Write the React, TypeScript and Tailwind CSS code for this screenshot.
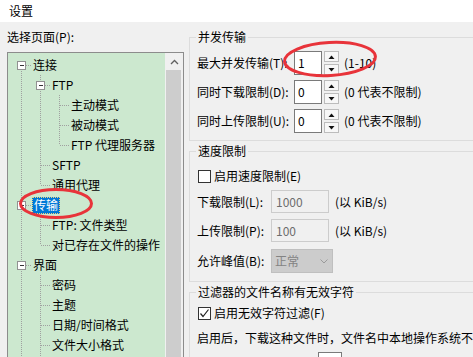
type Kind = "full" | "top" | "bottom" | "none";

type TreeRow = {
  label: string;
  cells: Kind[];
  expander?: boolean;
  selected?: boolean;
};

const rows: TreeRow[] = [
  { label: "连接", cells: ["bottom"], expander: true },
  { label: "FTP", cells: ["full", "full"], expander: true },
  { label: "主动模式", cells: ["full", "full", "full"] },
  { label: "被动模式", cells: ["full", "full", "full"] },
  { label: "FTP 代理服务器", cells: ["full", "full", "top"] },
  { label: "SFTP", cells: ["full", "full"] },
  { label: "通用代理", cells: ["full", "top"] },
  { label: "传输", cells: ["full"], expander: true, selected: true },
  { label: "FTP: 文件类型", cells: ["full", "full"] },
  { label: "对已存在文件的操作", cells: ["full", "top"] },
  { label: "界面", cells: ["full"], expander: true },
  { label: "密码", cells: ["full", "full"] },
  { label: "主题", cells: ["full", "full"] },
  { label: "日期/时间格式", cells: ["full", "full"] },
  { label: "文件大小格式", cells: ["full", "full"] },
  // last row is below the fold, only its tree lines peek in
  { label: "", cells: ["full", "full"] },
];

function TreeCell({ kind, connector, expander }: { kind: Kind; connector: boolean; expander?: boolean }) {
  const y1 = kind === "bottom" ? 10 : 0;
  const y2 = kind === "top" ? 10 : 20;
  return (
    <svg width="19" height="20" className="shrink-0" shapeRendering="crispEdges">
      {kind !== "none" && (
        <line x1="9.5" y1={y1} x2="9.5" y2={y2} stroke="#a0a0a0" strokeDasharray="1 1" />
      )}
      {connector && <line x1="10" y1="10.5" x2="19" y2="10.5" stroke="#a0a0a0" strokeDasharray="1 1" />}
      {expander && (
        <g>
          <rect x="5.5" y="6.5" width="8" height="8" fill="#ffffff" stroke="#919191" />
          <line x1="7.5" y1="10.5" x2="12" y2="10.5" stroke="#333333" />
        </g>
      )}
    </svg>
  );
}

function Tree() {
  return (
    <div className="mt-[7px] flex h-[320px] w-[177px] border border-[#8c8c8c] bg-[#cce8cf]">
      <div className="flex-1 overflow-hidden pl-[4px] pt-[2px]">
        {rows.map((r, idx) => (
          <div key={idx} className="flex h-[20px] items-center">
            {r.cells.map((k, i) => (
              <TreeCell
                key={i}
                kind={k}
                connector={i === r.cells.length - 1}
                expander={i === r.cells.length - 1 && r.expander}
              />
            ))}
            {r.selected ? (
              <span className="ml-[1px] flex h-[17px] items-center border border-dotted border-[#f2d27a] bg-[#0078d7] px-[1px] leading-[16px] text-white">
                {r.label}
              </span>
            ) : (
              <span className="ml-[2px] whitespace-nowrap leading-[16px]">{r.label}</span>
            )}
          </div>
        ))}
      </div>
      {/* scrollbar */}
      <div className="flex w-[18px] flex-col bg-[#f0f0f0]">
        <div className="flex h-[17px] items-center justify-center">
          <svg width="9" height="6" viewBox="0 0 9 6">
            <polyline points="1,5 4.5,1.5 8,5" fill="none" stroke="#606060" strokeWidth="1.3" />
          </svg>
        </div>
        <div className="ml-[1px] w-[15px] flex-1 bg-[#cdcdcd]" />
      </div>
    </div>
  );
}

function Spin({ value }: { value: string }) {
  return (
    <div className="flex items-center">
      <div className="flex h-[24px] w-[28px] items-center border border-[#7a7a7a] bg-white pl-[3px] leading-[16px]">
        {value}
      </div>
      <div className="ml-[2px] flex h-[24px] w-[15px] flex-col justify-between">
        <div className="flex h-[11px] items-center justify-center border border-[#bcbcbc] bg-[#f7f7f7]">
          <svg width="7" height="4" viewBox="0 0 7 4">
            <polygon points="0.5,4 3.5,0.5 6.5,4" fill="#111111" />
          </svg>
        </div>
        <div className="flex h-[11px] items-center justify-center border border-[#bcbcbc] bg-[#f7f7f7]">
          <svg width="7" height="4" viewBox="0 0 7 4">
            <polygon points="0.5,0 3.5,3.5 6.5,0" fill="#111111" />
          </svg>
        </div>
      </div>
    </div>
  );
}

function Group({ title, className, children }: { title: string; className?: string; children: React.ReactNode }) {
  return (
    <fieldset className={`w-[300px] border border-[#dcdcdc] pl-[7px] ${className ?? ""}`}>
      <legend className="ml-[-1px] px-[2px] leading-[16px]">{title}</legend>
      {children}
    </fieldset>
  );
}

function CheckBox({ checked }: { checked?: boolean }) {
  return (
    <div className="ml-[1px] flex h-[13px] w-[13px] shrink-0 items-center justify-center border border-[#333333] bg-white">
      {checked && (
        <svg width="11" height="11" viewBox="0 0 11 11">
          <polyline points="1.5,5.5 4,8.5 9.5,1.5" fill="none" stroke="#222222" strokeWidth="1.2" />
        </svg>
      )}
    </div>
  );
}

function DisabledInput({ value }: { value: string }) {
  return (
    <div className="flex h-[23px] w-[58px] items-center border border-[#cccccc] bg-[#f0f0f0] pl-[4px] leading-[16px] text-[#6d6d6d]">
      {value}
    </div>
  );
}

export default function App() {
  return (
    <div className="relative h-[357px] w-[473px] overflow-hidden bg-[#f0f0f0] font-['Noto_Sans_CJK_SC','Noto_Sans',sans-serif] text-[12px] text-black">
      <div className="flex h-[22px] items-center bg-white pl-[9px] leading-[16px]">设置</div>

      <div className="flex">
        {/* left: page tree */}
        <div className="w-[183px] shrink-0 pl-[7px]">
          <div className="mt-[7px] leading-[16px]">选择页面(P):</div>
          <Tree />
        </div>

        {/* right: settings */}
        <div className="ml-[6px] shrink-0">
          <Group title="并发传输" className="mt-[7px] pb-[7px]">
            <div className="mt-[6px] flex flex-col gap-[5px]">
              <div className="flex h-[24px] items-center">
                <span className="w-[97px] shrink-0 whitespace-nowrap">最大并发传输(T):</span>
                <Spin value="1" />
                <span className="ml-[5px]">(1-10)</span>
              </div>
              <div className="flex h-[24px] items-center">
                <span className="w-[97px] shrink-0 whitespace-nowrap">同时下载限制(D):</span>
                <Spin value="0" />
                <span className="ml-[5px]">(0 代表不限制)</span>
              </div>
              <div className="flex h-[24px] items-center">
                <span className="w-[97px] shrink-0 whitespace-nowrap">同时上传限制(U):</span>
                <Spin value="0" />
                <span className="ml-[5px]">(0 代表不限制)</span>
              </div>
            </div>
          </Group>

          <Group title="速度限制" className="mt-[2px] pb-[8px]">
            <div className="mt-[9px] flex h-[16px] items-center">
              <CheckBox />
              <span className="ml-[3px]">启用速度限制(E)</span>
            </div>
            <div className="mt-[6px] flex h-[23px] items-center">
              <span className="w-[74px] shrink-0">下载限制(L):</span>
              <DisabledInput value="1000" />
              <span className="ml-[6px]">(以 KiB/s)</span>
            </div>
            <div className="mt-[6px] flex h-[23px] items-center">
              <span className="w-[74px] shrink-0">上传限制(P):</span>
              <DisabledInput value="100" />
              <span className="ml-[6px]">(以 KiB/s)</span>
            </div>
            <div className="mt-[7px] flex h-[24px] items-center">
              <span className="w-[74px] shrink-0">允许峰值(B):</span>
              <div className="flex h-[24px] w-[62px] items-center justify-between border border-[#bfbfbf] bg-[#cccccc] pl-[3px] pr-[4px] text-[#838383]">
                <span>正常</span>
                <svg width="8" height="5" viewBox="0 0 8 5">
                  <polyline points="0.5,0.5 4,4 7.5,0.5" fill="none" stroke="#9a9a9a" strokeWidth="1" />
                </svg>
              </div>
            </div>
          </Group>

          <Group title="过滤器的文件名称有无效字符" className="mt-[2px]">
            <div className="mt-[5px] flex h-[16px] items-center">
              <CheckBox checked />
              <span className="ml-[3px]">启用无效字符过滤(F)</span>
            </div>
            <div className="mt-[9px] h-[16px] whitespace-nowrap leading-[16px]">
              启用后，下载这种文件时，文件名中本地操作系统不
            </div>
            <div className="mt-[5px] flex h-[24px] items-center">
              <div className="ml-[121px] h-[22px] w-[24px] border border-[#7a7a7a] bg-white" />
            </div>
          </Group>
        </div>
      </div>

      {/* red annotation marks */}
      <svg className="pointer-events-none absolute left-0 top-0" width="473" height="357">
        <ellipse cx="330" cy="59" rx="45.5" ry="16.5" fill="none" stroke="#e8333a" strokeWidth="3" transform="rotate(-3 330 59)" />
        <ellipse cx="56" cy="203.5" rx="35.5" ry="14" fill="none" stroke="#e8333a" strokeWidth="3" />
      </svg>
    </div>
  );
}
